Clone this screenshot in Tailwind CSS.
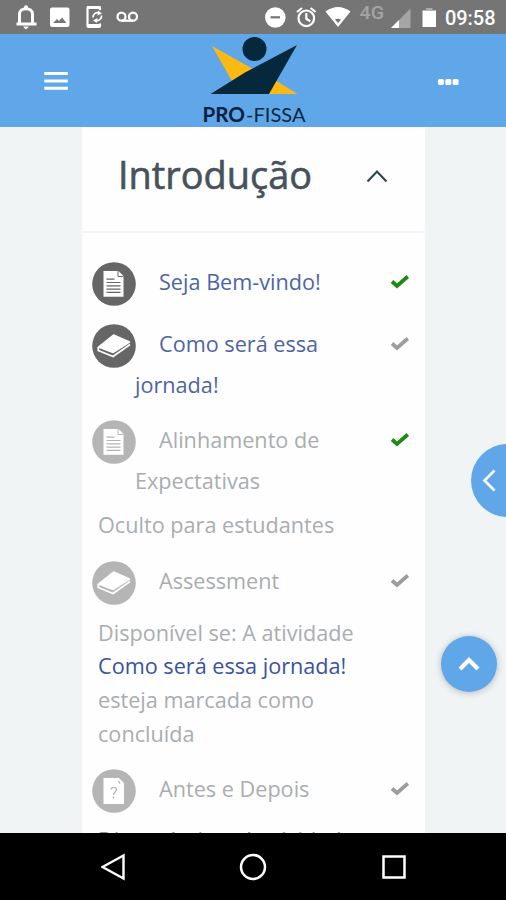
<!DOCTYPE html>
<html lang="pt-BR">
<head>
<meta charset="utf-8">
<title>PRO-FISSA</title>
<script src="https://cdn.jsdelivr.net/npm/@tailwindcss/browser@4"></script>
</head>
<body class="relative flex h-[900px] w-[506px] flex-col overflow-hidden bg-[#f0f4f5] font-['Open_Sans',sans-serif]">
<svg class="hidden">
  <symbol id="check" viewBox="0 0 20 16"><path d="M2 7.500 7 12 17.800 2.500" fill="none" stroke="currentColor" stroke-width="3.8"/></symbol>
  <symbol id="page" viewBox="0 0 44 44"><circle cx="22" cy="22" r="21.8" fill="currentColor"/><path d="M11.500 9h15l5 5v20.700h-20z" fill="#fff"/><path d="M26 9v5.500h5.500" fill="none" stroke="currentColor"/><path d="M14.500 17.200h8M14.500 20.500h14M14.500 23.800h14M14.500 27.100h14M14.500 30.400h14" stroke="currentColor" stroke-width="1.200"/></symbol>
  <symbol id="book" viewBox="0 0 44 44"><circle cx="22" cy="22" r="21.8" fill="currentColor"/><path d="M6.500 23 21.500 11l16 7L21 28.500z" fill="#fff" stroke="#fff" stroke-width="1.500" stroke-linejoin="round"/><path d="M6.300 23v3.500L21 32.500l17-12" fill="none" stroke="#fff" stroke-width="1.800" stroke-linejoin="round"/></symbol>
  <symbol id="quiz" viewBox="0 0 44 44"><circle cx="22" cy="22" r="21.8" fill="currentColor"/><path d="M11.500 9h15.500l5 5v21H11.500z" fill="#fff"/><path d="M26.500 12l1.500 2.500" stroke="currentColor" stroke-width="1.300"/><path d="M19 20.500c.5-3 5.800-2.800 5.500.3-.2 2-3 2.700-3 5.200M21.400 27.500v2" fill="none" stroke="currentColor" stroke-width="1.400"/></symbol>
</svg>

<header class="flex h-[34px] shrink-0 items-center bg-[#757575] text-white">
  <svg class="h-[34px] w-[506px]" viewBox="0 0 506 34" fill="#fff">
    <path d="M19.500 23.500V14c0-7 13-7 13 0v9.500M16.500 24h20" fill="none" stroke="#fff" stroke-width="3"/><circle cx="26" cy="7.300" r="2"/><path d="M23 26.500h6l-3 3z"/>
    <path fill-rule="evenodd" d="M52 7.500h15.500q2 0 2 2V25q0 2-2 2H52q-2 0-2-2V9.500q0-2 2-2M53 23h13.500l-4.500-5.500-3 3.500-2-2z"/>
    <path d="M100 10V8q0-1-1-1H88.500q-1 0-1 1v18q0 1 1 1H99q1 0 1-1v-2.500" fill="none" stroke="#fff" stroke-width="2.200"/><path d="M87 6h13.500v3H87zM87 24h13.500v3H87z"/><path d="M93 17.500a4.500 4.500 0 0 1 6-4.500M101.500 15.500a4.500 4.500 0 0 1-5.500 5" fill="none" stroke="#fff" stroke-width="1.700"/><path d="M98 10.500l4 3-4.500 2zM97 23l-4-2.500 4.500-2.500z"/>
    <g fill="none" stroke="#fff" stroke-width="2.300"><circle cx="121.500" cy="16.700" r="4"/><circle cx="133" cy="16.700" r="4"/><path d="M121.500 20.700H133"/></g>
    <circle cx="275.300" cy="17.500" r="10.300"/><path d="M270.500 17.300h9.500" stroke="#757575" stroke-width="2.200"/>
    <g fill="none" stroke="#fff" stroke-width="2.200"><circle cx="306.300" cy="18.300" r="7.800"/><path d="M306.300 13v5.800l4 2.400M297 12l5-4M315.600 12l-5-4"/></g>
    <path d="M325.500 11.500q12.500-9 25 0L338 27z"/><path d="M335 19.500q3-1.500 6 0l-3 3.500z" fill="#757575"/>
    <path d="M410.500 8.500V28H391z" fill="#a5a5a5"/><path d="M399 20v8h-8z"/>
    <path d="M422.500 10.500H436V27h-13.500z"/><path d="M426 8h6.500v2.500H426z" fill="#aaa"/>
    <text x="359.500" y="19" font-family="Roboto" font-size="18.500" font-weight="500" fill="#a4a4a4" textLength="24.500" lengthAdjust="spacingAndGlyphs">4G</text>
    <text x="445" y="25" font-family="Roboto" font-size="20" font-weight="500" textLength="50.500">09:58</text>
  </svg>
</header>

<nav class="flex h-[93px] shrink-0 items-start justify-between bg-[#60a7ea] pr-[47px] pl-11">
  <svg class="mt-[37px] h-5 w-6" viewBox="0 0 24 20"><path d="M.3 2.500h23.500M.3 10h23.500M.3 17.300h23.500" stroke="#fff" stroke-width="3"/></svg>
  <svg class="-mr-[4px] h-[92px] w-[110px]" viewBox="0 0 110 92">
    <path d="M12 12 53 35 32 47z" fill="#fdb913"/><path d="M75 46 97.500 60H68z" fill="#fdb913"/>
    <path d="M10.500 60 45 38.500 97 11 69 60z" fill="#06283d"/><circle cx="54.500" cy="15" r="12" fill="#06283d"/>
    <text x="2.500" y="87.500" font-family="Lato" font-size="20" font-weight="700" fill="#06203f" textLength="42.500" lengthAdjust="spacingAndGlyphs">PRO</text>
    <text x="46" y="87.500" font-family="Lato" font-size="20" fill="#06283d" textLength="59.500" lengthAdjust="spacingAndGlyphs">-FISSA</text>
  </svg>
  <svg class="mt-[44px] h-2 w-[21px]" viewBox="0 0 21 8" fill="#fff"><rect y="1" width="6" height="6" rx="1.500"/><rect x="7.300" y="1" width="6" height="6" rx="1.500"/><rect x="14.600" y="1" width="6" height="6" rx="1.500"/></svg>
</nav>

<main class="mr-[81px] ml-[82px] h-[706px] shrink-0 overflow-hidden bg-[#fefefe] text-[21.650px] text-[#aaadb0]">
  <div class="flex h-[106px] items-start justify-between border-b-2 border-[#f2f4f5] pr-[37px] pl-[36px]">
    <h2 class="mt-[19px] text-[37.900px] leading-[56px] whitespace-nowrap text-[#46525c] [-webkit-text-stroke:0.600px_#46525c]">Introdução</h2>
    <svg class="mt-[42px] h-[14px] w-[22px]" viewBox="0 0 22 14"><path d="M1.500 12.500 11 2.500l9.500 10" fill="none" stroke="#37474f" stroke-width="2.200"/></svg>
  </div>
  <ul class="pt-[28px]">
    <li class="flex h-[62px] items-start px-[10px] text-[#4f64a5]">
      <svg class="mt-[1px] h-11 w-11 shrink-0 text-[#666]"><use href="#page"/></svg>
      <p class="-ml-px w-[255px] indent-[24px] leading-[41px]">Seja Bem-vindo!</p>
      <svg class="mt-[13px] h-4 w-5 shrink-0 text-[#1e8a16]"><use href="#check"/></svg>
    </li>
    <li class="flex h-[96px] items-start px-[10px] text-[#4f64a5]">
      <svg class="mt-[1px] h-11 w-11 shrink-0 text-[#666]"><use href="#book"/></svg>
      <p class="-ml-px w-[255px] indent-[24px] leading-[41px]">Como será essa<br>jornada!</p>
      <svg class="mt-[13px] h-4 w-5 shrink-0 text-[#9d9d9d]"><use href="#check"/></svg>
    </li>
    <li class="h-[141px]">
      <div class="flex h-[89px] items-start px-[10px]">
        <svg class="mt-[1px] h-11 w-11 shrink-0 text-[#b5b5b5]"><use href="#page"/></svg>
        <p class="-ml-px w-[255px] indent-[24px] leading-[41px]">Alinhamento de<br>Expectativas</p>
        <svg class="mt-[13px] h-4 w-5 shrink-0 text-[#1e8a16]"><use href="#check"/></svg>
      </div>
      <p class="pl-4 leading-[34px]">Oculto para estudantes</p>
    </li>
    <li class="h-[208px]">
      <div class="flex h-[55.500px] items-start px-[10px]">
        <svg class="mt-[1px] h-11 w-11 shrink-0 text-[#b5b5b5]"><use href="#book"/></svg>
        <p class="-ml-px w-[255px] indent-[24px] leading-[41px]">Assessment</p>
        <svg class="mt-[13px] h-4 w-5 shrink-0 text-[#9d9d9d]"><use href="#check"/></svg>
      </div>
      <p class="pl-4 leading-[33.700px] whitespace-nowrap">Disponível se: A atividade<br><a class="text-[#3a52a0]">Como será essa jornada!</a><br>esteja marcada como<br>concluída</p>
    </li>
    <li>
      <div class="flex h-[55px] items-start px-[10px]">
        <svg class="mt-[1px] h-11 w-11 shrink-0 text-[#b5b5b5]"><use href="#quiz"/></svg>
        <p class="-ml-px w-[255px] indent-[24px] leading-[41px]">Antes e Depois</p>
        <svg class="mt-[13px] h-4 w-5 shrink-0 text-[#9d9d9d]"><use href="#check"/></svg>
      </div>
      <p class="pl-4 leading-[33.700px] whitespace-nowrap text-[#8a8d90]">Disponível se: A atividade</p>
    </li>
  </ul>
</main>

<footer class="flex h-[67px] shrink-0 items-center justify-between bg-black pr-[99px] pl-[101px]">
  <svg class="h-7 w-6" viewBox="0 0 24 28"><path d="M1.500 14 22.500 2.500v23z" fill="none" stroke="#fff" stroke-width="2.400"/></svg>
  <svg class="h-7 w-7" viewBox="0 0 28 28"><circle cx="14" cy="14" r="12" fill="none" stroke="#fff" stroke-width="2.500"/></svg>
  <svg class="h-[26px] w-[26px]" viewBox="0 0 26 26"><path d="M2.500 2.500h21v21h-21z" fill="none" stroke="#fff" stroke-width="2.500"/></svg>
</footer>

<button class="absolute top-[444px] right-0 h-[73px] w-[35px]"><svg class="h-[73px] w-[35px]" viewBox="0 0 35 73"><circle cx="36.500" cy="36.500" r="36.500" fill="#60a7ea"/><path d="M23.500 26.500l-10 10 10 10" fill="none" stroke="#fff" stroke-width="2.600"/></svg></button>
<button class="absolute top-[636px] left-[441px] flex h-14 w-14 items-center justify-center rounded-full bg-[#60a7ea] shadow-[0_1px_7px_rgba(0,0,0,0.250)]"><svg class="h-4 w-[22px]" viewBox="0 0 22 16"><path d="m2 13 9-9 9 9" fill="none" stroke="#fff" stroke-width="4.200"/></svg></button>
</body>
</html>
